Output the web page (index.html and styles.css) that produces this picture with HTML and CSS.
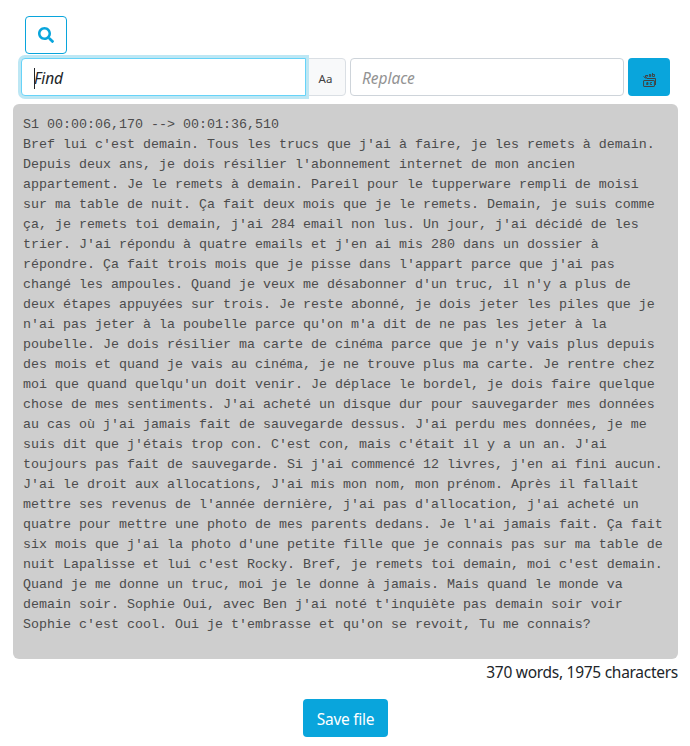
FILE: index.html
```html
<!DOCTYPE html>
<html lang="fr">
<head>
<meta charset="utf-8">
<title>Transcript editor</title>
<link rel="stylesheet" href="styles.css">
</head>
<body>
<main class="editor">
  <button class="btn btn-outline" aria-label="Search">
    <svg width="16" height="16" viewBox="0 0 512 512" fill="currentColor"><path d="M505 442.700L405.300 343c-4.500-4.500-10.600-7-17-7H372c27.600-35.300 44-79.700 44-128C416 93.100 322.900 0 208 0S0 93.100 0 208s93.100 208 208 208c48.300 0 92.700-16.400 128-44v16.300c0 6.400 2.500 12.500 7 17l99.700 99.700c9.400 9.400 24.600 9.400 33.900 0l28.300-28.300c9.400-9.400 9.400-24.600.1-34zM208 336c-70.700 0-128-57.200-128-128 0-70.700 57.200-128 128-128 70.700 0 128 57.200 128 128 0 70.700-57.200 128-128 128z"/></svg>
  </button>
  <div class="toolbar">
    <div class="field find"><span class="caret"></span><span class="find-text">Find</span></div>
    <div class="case"><span>Aa</span></div>
    <div class="field replace"><span class="replace-text">Replace</span></div>
    <button class="btn btn-replace" aria-label="Replace all">
      <svg width="14" height="14" viewBox="0 0 14 14" fill="none" stroke="#424242"><rect x=".6" y="7.500" width="10.800" height="6" rx=".5"/><path d="M3.500 5.500h9v6.500M5 2.500H2.500v2M.500 3.500l2 1.500 2-1.500"/><path stroke-width=".9" d="M3.500 9.500H5v2H3.500v-1H5M9 9.500H7.300v2H9M6 1.500h1.800v2H6.300v-1h1.500M9.500 0v3.500h2v-2h-2"/></svg>
    </button>
  </div>
  <div class="transcript">S1 00:00:06,170 --&gt; 00:01:36,510
Bref lui c'est demain. Tous les trucs que j'ai à faire, je les remets à demain.
Depuis deux ans, je dois résilier l'abonnement internet de mon ancien
appartement. Je le remets à demain. Pareil pour le tupperware rempli de moisi
sur ma table de nuit. Ça fait deux mois que je le remets. Demain, je suis comme
ça, je remets toi demain, j'ai 284 email non lus. Un jour, j'ai décidé de les
trier. J'ai répondu à quatre emails et j'en ai mis 280 dans un dossier à
répondre. Ça fait trois mois que je pisse dans l'appart parce que j'ai pas
changé les ampoules. Quand je veux me désabonner d'un truc, il n'y a plus de
deux étapes appuyées sur trois. Je reste abonné, je dois jeter les piles que je
n'ai pas jeter à la poubelle parce qu'on m'a dit de ne pas les jeter à la
poubelle. Je dois résilier ma carte de cinéma parce que je n'y vais plus depuis
des mois et quand je vais au cinéma, je ne trouve plus ma carte. Je rentre chez
moi que quand quelqu'un doit venir. Je déplace le bordel, je dois faire quelque
chose de mes sentiments. J'ai acheté un disque dur pour sauvegarder mes données
au cas où j'ai jamais fait de sauvegarde dessus. J'ai perdu mes données, je me
suis dit que j'étais trop con. C'est con, mais c'était il y a un an. J'ai
toujours pas fait de sauvegarde. Si j'ai commencé 12 livres, j'en ai fini aucun.
J'ai le droit aux allocations, J'ai mis mon nom, mon prénom. Après il fallait
mettre ses revenus de l'année dernière, j'ai pas d'allocation, j'ai acheté un
quatre pour mettre une photo de mes parents dedans. Je l'ai jamais fait. Ça fait
six mois que j'ai la photo d'une petite fille que je connais pas sur ma table de
nuit Lapalisse et lui c'est Rocky. Bref, je remets toi demain, moi c'est demain.
Quand je me donne un truc, moi je le donne à jamais. Mais quand le monde va
demain soir. Sophie Oui, avec Ben j'ai noté t'inquiète pas demain soir voir
Sophie c'est cool. Oui je t'embrasse et qu'on se revoit, Tu me connais?</div>
  <div class="count"><span>370 words, 1975 characters</span></div>
  <button class="btn btn-save">Save file</button>
</main>
</body>
</html>
```
FILE: styles.css
```css
* { box-sizing: border-box; }
body {
  margin: 0;
  background: #fff;
  color: #212529;
  font: 15.5px/24px "Noto Sans", "Open Sans", sans-serif;
}
.editor {
  display: flex;
  flex-direction: column;
  padding: 16px 12px 0 13px;
}
.btn {
  display: flex;
  align-items: center;
  justify-content: center;
  height: 38px;
  padding: 0;
  border: 0;
  border-radius: 4px;
  background: #09a5dc;
  color: #fff;
  font: inherit;
}
.btn-outline {
  width: 42px;
  margin-left: 12px;
  border: 1px solid #09a5dc;
  background: #fff;
  color: #09a5dc;
}
.toolbar {
  display: flex;
  margin: 4px 8px 8px;
}
.field {
  display: flex;
  align-items: center;
  height: 38px;
  padding: 2px 0 0 12px;
  border: 1px solid #ced4da;
  border-radius: 4px;
  background: #fff;
  font-style: italic;
}
.find {
  width: 285px;
  border-color: #67d3f8;
  border-radius: 4px 0 0 4px;
  box-shadow: 0 0 0 3px #bde7f4;
  z-index: 1;
}
.caret {
  width: 1px;
  height: 21px;
  margin-right: -1px;
  background: #212529;
}
.find-text { letter-spacing: -0.1px; }
.case {
  display: flex;
  align-items: center;
  justify-content: center;
  width: 41px;
  margin-left: -1px;
  padding-top: 4px;
  border: 1px solid #dadfe4;
  border-radius: 0 4px 4px 0;
  background: #f8f9fa;
  color: #424242;
  font-size: 11.5px;
}
.replace {
  width: 274px;
  margin-left: 4px;
  padding-left: 11px;
  color: #939393;
}
.replace-text { letter-spacing: -0.05px; }
.btn-replace {
  width: 42px;
  margin-left: 4px;
  padding: 6px 0 0 1px;
}
.transcript {
  height: 555px;
  padding: 11px 10px 9px;
  border-radius: 6px;
  background: #cecece;
  color: #4c4c4c;
  font: 13.333px/20px "Liberation Mono", monospace;
  white-space: pre;
}
.count {
  align-self: flex-end;
  margin-top: 1px;
  letter-spacing: -0.28px;
}
.btn-save {
  width: 85px;
  margin: 15px 0 0 290px;
  padding-top: 2px;
  letter-spacing: -0.28px;
}
```
